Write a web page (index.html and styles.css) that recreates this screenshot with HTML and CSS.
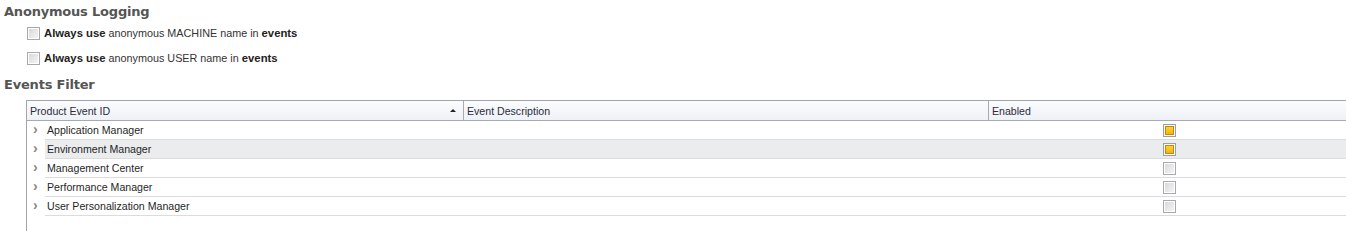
FILE: index.html
```html
<!DOCTYPE html>
<html>

<head>
    <title>Logging Settings</title>
    <link rel="stylesheet" href="styles.css">
</head>

<body>
    <h2 class="sectionTitle">Anonymous Logging</h2>
    <div class="optionList">
        <label class="option"><span class="box"></span><b>Always use</b> anonymous MACHINE name in <b>events</b></label>
        <label class="option"><span class="box"></span><b>Always use</b> anonymous USER name in <b>events</b></label>
    </div>
    <h2 class="sectionTitle">Events Filter</h2>
    <div class="grid">
        <div class="gridHead">
            <div class="col colId">Product Event ID<span class="sortArrow"></span></div>
            <div class="col colDesc">Event Description</div>
            <div class="col colEnabled">Enabled</div>
        </div>
        <div class="gridRow">
            <span class="expander">&#8250;</span>
            <div class="rowBody">
                <div class="cell colId">Application Manager</div>
                <div class="cell colDesc"></div>
                <div class="cell colEnabled"><span class="box on"></span></div>
            </div>
        </div>
        <div class="gridRow">
            <span class="expander">&#8250;</span>
            <div class="rowBody hover">
                <div class="cell colId">Environment Manager</div>
                <div class="cell colDesc"></div>
                <div class="cell colEnabled"><span class="box on"></span></div>
            </div>
        </div>
        <div class="gridRow">
            <span class="expander">&#8250;</span>
            <div class="rowBody">
                <div class="cell colId">Management Center</div>
                <div class="cell colDesc"></div>
                <div class="cell colEnabled"><span class="box"></span></div>
            </div>
        </div>
        <div class="gridRow">
            <span class="expander">&#8250;</span>
            <div class="rowBody">
                <div class="cell colId">Performance Manager</div>
                <div class="cell colDesc"></div>
                <div class="cell colEnabled"><span class="box"></span></div>
            </div>
        </div>
        <div class="gridRow">
            <span class="expander">&#8250;</span>
            <div class="rowBody">
                <div class="cell colId">User Personalization Manager</div>
                <div class="cell colDesc"></div>
                <div class="cell colEnabled"><span class="box"></span></div>
            </div>
        </div>
    </div>
</body>

</html>
```

FILE: styles.css
```css
* {
    padding: 0;
    margin: 0;
    box-sizing: border-box;
}

body {
    font-family: "Liberation Sans", Arial, sans-serif;
    font-size: 10.6px;
    color: #1f1f1f;
    background: #fff;
    padding: 3px 0 0 4px;
}

.sectionTitle {
    font-family: "DejaVu Sans", sans-serif;
    font-size: 13px;
    font-weight: bold;
    color: #555;
    line-height: 18px;
    letter-spacing: -0.2px;
}

.optionList {
    padding: 6px 0 0 23px;
    display: flex;
    flex-direction: column;
    gap: 12px;
    margin-bottom: 11px;
}

.option {
    display: block;
    font-size: 10.8px;
    color: #333;
    line-height: 13px;
    white-space: nowrap;
}

.option .box {
    vertical-align: top;
    margin-right: 4px;
}

.option b {
    font-size: 11.3px;
    color: #222;
}

.box {
    display: inline-block;
    width: 13px;
    height: 13px;
    border: 1px solid #a6a9ae;
    background: linear-gradient(135deg, #d6d6d6, #f7f7f7);
    box-shadow: inset 0 0 0 1px #fff;
}

.box.on {
    border-color: #9a9ea5;
    background: linear-gradient(#ffd94a, #f2a900);
    box-shadow: inset 0 0 0 1px #fff, inset 0 0 0 2px #c48a00;
}

.grid {
    margin: 6px 0 0 22px;
    border-left: 1px solid #a0a5ae;
    border-top: 1px solid #a0a5ae;
    height: 131px;
}

.gridHead {
    display: flex;
    height: 20px;
    border-bottom: 1px solid #a6abb3;
    background: linear-gradient(#fbfcfd, #eef1f6);
    color: #2b2b3e;
}

.col {
    padding: 3px 0 0 3px;
    line-height: 14px;
    position: relative;
}

.colId {
    width: 436px;
    flex: none;
}

.colDesc {
    width: 525px;
    flex: none;
}

.colEnabled {
    flex: 1;
}

.gridHead .colDesc,
.gridHead .colEnabled {
    border-left: 1px solid #a6abb3;
}

.sortArrow {
    position: absolute;
    right: 7px;
    top: 8px;
    border-left: 3px solid transparent;
    border-right: 3px solid transparent;
    border-bottom: 3px solid #222;
}

.gridRow {
    display: flex;
    height: 19px;
}

.expander {
    width: 19px;
    flex: none;
    font-size: 14px;
    line-height: 17px;
    padding-left: 6px;
    color: #888;
    font-weight: bold;
}

.rowBody {
    flex: 1;
    display: flex;
    border-bottom: 1px solid #dcdcdc;
    margin-left: -1px;
}

.rowBody.hover {
    background: #ebecee;
}

.cell {
    line-height: 18px;
    padding-left: 2px;
}

.rowBody .colId {
    width: 418px;
}

.rowBody .colDesc {
    width: 526px;
}

.rowBody .colEnabled {
    padding: 3px 0 0 174px;
}

.rowBody .box {
    display: block;
}
```
